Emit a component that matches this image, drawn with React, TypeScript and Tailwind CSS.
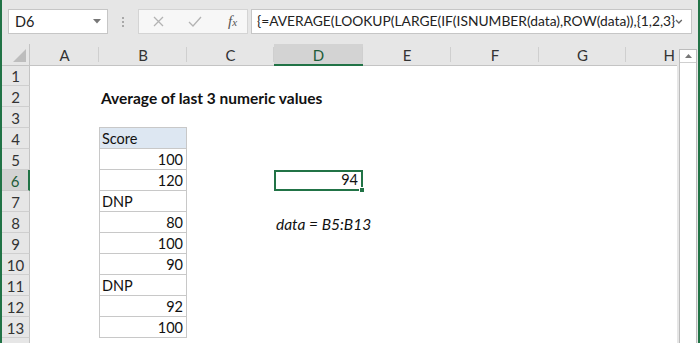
import React from "react";

type Cell = { text?: string; align?: "l" | "r"; bold?: boolean; italic?: boolean };

const rows: Record<number, Record<number, Cell>> = {
  2: { 2: { text: "Average of last 3 numeric values", bold: true } },
  4: { 2: { text: "Score" } },
  5: { 2: { text: "100", align: "r" } },
  6: { 2: { text: "120", align: "r" }, 4: { text: "94", align: "r" } },
  7: { 2: { text: "DNP" } },
  8: { 2: { text: "80", align: "r" }, 4: { text: "data = B5:B13", italic: true } },
  9: { 2: { text: "100", align: "r" } },
  10: { 2: { text: "90", align: "r" } },
  11: { 2: { text: "DNP" } },
  12: { 2: { text: "92", align: "r" } },
  13: { 2: { text: "100", align: "r" } },
  14: {},
};

const colLetters = ["A", "B", "C", "D", "E", "F", "G", "H"];

function Toolbar() {
  return (
    <div className="h-[44px] shrink-0 flex items-start pt-[9px] pl-[6px]">
      <div className="w-[100px] h-[25px] bg-white border border-[#c6c6c6] flex items-center justify-between pl-[6px] pr-[6px]">
        <span className="text-[14.5px] text-[#222]">D6</span>
        <svg width="8" height="5" viewBox="0 0 8 5">
          <path d="M0 0 L8 0 L4 4.5 Z" fill="#777" />
        </svg>
      </div>
      <div className="w-[30px] h-[25px] flex flex-col items-center justify-center gap-[2px]">
        <div className="w-[2px] h-[2px] bg-[#a8a8a8]" />
        <div className="w-[2px] h-[2px] bg-[#a8a8a8]" />
        <div className="w-[2px] h-[2px] bg-[#a8a8a8]" />
      </div>
      <div className="w-[110px] h-[25px] bg-[#f7f7f7] border border-[#d4d4d4] flex items-center pl-[14px] gap-[24px]">
        <svg width="11" height="11" viewBox="0 0 11 11">
          <path d="M1 1 L10 10 M10 1 L1 10" stroke="#b3b3b3" strokeWidth="1.3" fill="none" />
        </svg>
        <svg width="14" height="11" viewBox="0 0 14 11">
          <path d="M1 6 L5 10 L13 1" stroke="#b3b3b3" strokeWidth="1.3" fill="none" />
        </svg>
        <span className="font-['Liberation_Serif',serif] italic text-[15px] text-[#555] leading-none ml-[2px]">
          f<span className="text-[11px]">x</span>
        </span>
      </div>
      <div className="ml-[3px] w-[441px] h-[25px] bg-white border border-[#c6c6c6] flex items-center justify-between pl-[5px] pr-[8px]">
        <span className="text-[13.8px] text-[#222] whitespace-nowrap">
          {"{=AVERAGE(LOOKUP(LARGE(IF(ISNUMBER(data),ROW(data)),{1,2,3}"}
        </span>
        <svg width="8" height="6" viewBox="0 0 8 6">
          <path d="M1 1 L4 4 L7 1" stroke="#666" strokeWidth="1.4" fill="none" />
        </svg>
      </div>
    </div>
  );
}

export default function App() {
  return (
    <div className="w-[700px] h-[343px] overflow-hidden bg-[#e6e6e6] flex font-['Lato',sans-serif]">
      <div className="w-[2px] bg-[#217346] shrink-0" />
      <div className="w-[696px] flex flex-col shrink-0">
        <Toolbar />
        <div className="flex shrink-0">
          <div className="grid grid-cols-[28px_69px_88px_87px_89px_88px_88px_87px_51px] auto-rows-[21px] bg-white w-[675px]">
            <div className="h-[22px] bg-[#e6e6e6] border-b border-r border-[#c4c4c4] relative">
              <svg className="absolute right-[3px] bottom-[3px]" width="13" height="13" viewBox="0 0 13 13">
                <path d="M13 0 L13 13 L0 13 Z" fill="#bdbdbd" />
              </svg>
            </div>
            {colLetters.map((c, i) => (
              <div
                key={c}
                className={
                  c === "D"
                    ? "h-[22px] bg-[#d3d3d3] border-b-2 border-[#217346] flex items-center justify-center pt-[2px] text-[15px] text-[#1d5c38] relative"
                    : c === "H"
                    ? "h-[22px] bg-[#e6e6e6] border-b border-[#c4c4c4] flex items-center justify-end pt-[2px] pr-[2px] text-[15px] text-[#333] relative"
                    : "h-[22px] bg-[#e6e6e6] border-b border-[#c4c4c4] flex items-center justify-center pt-[2px] text-[15px] text-[#333] relative"
                }
              >
                {c}
                {i < colLetters.length - 1 && (
                  <div className="absolute right-0 top-[3px] bottom-[3px] w-px bg-[#cfcfcf]" />
                )}
              </div>
            ))}
            {Array.from({ length: 14 }, (_, r) => r + 1).map((r) => {
              const rowCells = rows[r] || {};
              return (
                <React.Fragment key={r}>
                  <div
                    className={
                      r === 6
                        ? "bg-[#d3d3d3] border-b border-[#c9c9c9] border-r-2 border-r-[#217346] flex items-center justify-center text-[15px] text-[#1d5c38] pt-[2px]"
                        : "bg-[#e6e6e6] border-b border-[#cfcfcf] border-r border-r-[#c4c4c4] flex items-center justify-center text-[15px] text-[#333] pt-[2px]"
                    }
                  >
                    {r <= 13 ? r : ""}
                  </div>
                  {Array.from({ length: 8 }, (_, c) => c + 1).map((c) => {
                    const cell = rowCells[c];
                    let cls = "relative flex items-end pb-[0px] text-[14.5px] text-[#111] leading-[18px]";
                    if (c === 2 && r >= 4 && r <= 13) cls += " border-l border-r border-b border-[#c8c8c8]";
                    if (c === 2 && r === 3) cls += " border-b border-[#c8c8c8]";
                    if (c === 2 && r === 4) cls += " bg-[#dde7f2]";
                    if (c === 4 && r === 6) cls += " border-2 border-[#217346]";
                    if (cell?.align === "r") cls += " justify-end pr-[3px]";
                    else cls += " pl-[2px]";
                    return (
                      <div key={c} className={cls}>
                        {cell?.text && (
                          <span
                            className={
                              "whitespace-nowrap relative z-10" +
                              (cell.bold ? " font-bold text-[15.5px]" : "") +
                              (cell.italic ? " italic text-[15.5px]" : "")
                            }
                          >
                            {cell.text}
                          </span>
                        )}
                        {c === 4 && r === 6 && (
                          <div className="absolute right-[-4px] bottom-[-4px] w-[6px] h-[6px] bg-[#217346] border border-white z-20" />
                        )}
                      </div>
                    );
                  })}
                </React.Fragment>
              );
            })}
          </div>
          <div className="w-[21px] pl-[2px] pt-[5px] flex flex-col">
            <div className="w-[18px] h-[300px] bg-white border border-[#bcbcbc] flex flex-col">
              <div className="h-[13px] border-b border-[#cfcfcf] flex items-center justify-center">
                <svg width="7" height="4" viewBox="0 0 7 4">
                  <path d="M0 4 L3.5 0 L7 4 Z" fill="#777" />
                </svg>
              </div>
            </div>
          </div>
        </div>
      </div>
      <div className="w-[2px] bg-[#217346] shrink-0" />
    </div>
  );
}
